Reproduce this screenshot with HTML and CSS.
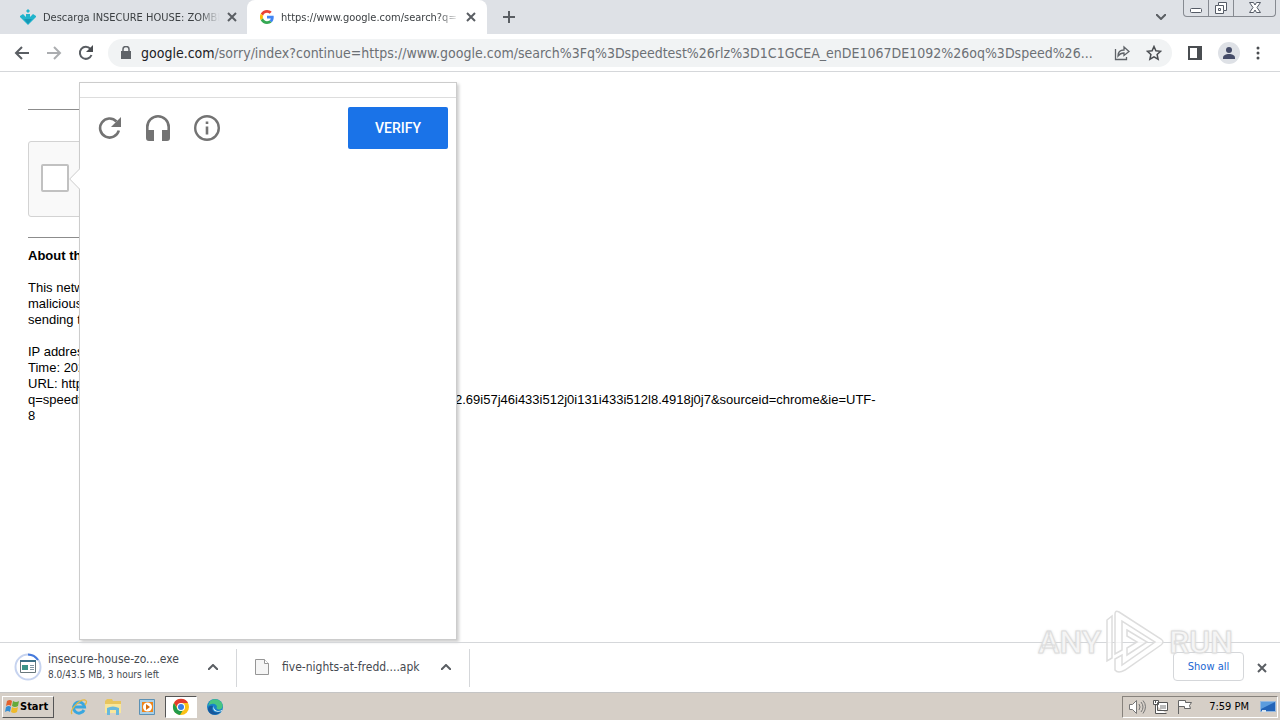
FILE: index.html
```html
<!DOCTYPE html>
<html lang="en">
<head>
<meta charset="utf-8">
<title>google.com/sorry</title>
<link rel="stylesheet" href="styles.css">
</head>
<body>
<div class="desktop">
<header class="tabs">
  <div class="tab">
    <svg class="fav" viewBox="0 0 16 16"><path fill="#20b4cc" d="M8 0l2 2-2 2-2-2zM0 7l3-2 3 3V5h4v3l3-3 3 2v1l-8 8-8-8z"/><path fill="#1697b5" d="M4 10h8l-4 5z"/></svg>
    <span class="tab-title">Descarga INSECURE HOUSE: ZOMBI</span>
    <button class="plain" aria-label="Close tab"><svg width="10" height="10" viewBox="0 0 10 10"><path class="line" d="M1 1l8 8M9 1l-8 8"/></svg></button>
  </div>
  <div class="tab active">
    <svg class="fav google" viewBox="0 0 48 48"><path fill="#ea4335" d="M24 9.5c3.5 0 6.700 1.200 9.200 3.600l6.900-6.900C35.900 2.400 30.500 0 24 0 14.600 0 6.500 5.400 2.600 13.200l8 6.200C12.400 13.700 17.700 9.500 24 9.500z"/><path fill="#4285f4" d="M47 24.500c0-1.600-.2-3.100-.4-4.500H24v9h12.900c-.6 3-2.300 5.500-4.800 7.200l7.700 6C44.400 38 47 32 47 24.500z"/><path fill="#fbbc05" d="M10.500 28.600a14 14 0 010-9.200l-8-6.200a24 24 0 000 21.600z"/><path fill="#34a853" d="M24 48c6.500 0 11.900-2.100 15.900-5.800l-7.700-6c-2.200 1.500-4.900 2.300-8.200 2.300-6.300 0-11.600-4.200-13.500-9.900l-8 6.200C6.500 42.600 14.600 48 24 48z"/></svg>
    <span class="tab-title">https://www.google.com/search?q=</span>
    <button class="plain" aria-label="Close tab"><svg width="10" height="10" viewBox="0 0 10 10"><path class="line" d="M1 1l8 8M9 1l-8 8"/></svg></button>
  </div>
  <button class="plain new-tab" aria-label="New tab"><svg width="12" height="12" viewBox="0 0 12 12"><path class="line" d="M6 0v12M0 6h12"/></svg></button>
  <button class="plain tab-search" aria-label="Search tabs"><svg width="10" height="6" viewBox="0 0 10 6"><path class="line" d="M0 0l5 5 5-5"/></svg></button>
  <div class="window-controls">
    <button aria-label="Minimize"><svg width="14" height="16" viewBox="0 0 14 16"><rect x="1.500" y="8.500" width="11" height="4" rx="1" fill="#fff" stroke="#555b66"/></svg></button>
    <button aria-label="Restore"><svg width="14" height="16" viewBox="0 0 14 16"><g fill="#fff" stroke="#555b66"><path d="M4.500 2.500h8v8h-3v3h-8v-8h3z"/><path d="M4.500 5.500h5v5M4.500 8.500h2v2h-2z"/></g></svg></button>
    <button class="wide" aria-label="Close"><svg width="14" height="14" viewBox="0 0 14 14"><path fill="#fff" stroke="#555b66" d="M1.500 1.500h4L7 4l1.500-2.500h4L9 6.500l3.500 5h-4L7 9l-1.500 2.500h-4l3.500-5z"/></svg></button>
  </div>
</header>
<nav class="toolbar">
  <button class="plain" aria-label="Back"><svg width="16" height="16" viewBox="0 0 16 16"><path class="bold" d="M15 8H2M8 2L2 8l6 6"/></svg></button>
  <button class="plain pale" aria-label="Forward"><svg width="16" height="16" viewBox="0 0 16 16"><path class="bold" d="M1 8h13M8 2l6 6-6 6"/></svg></button>
  <button class="plain" aria-label="Reload"><svg width="16" height="16" viewBox="0 0 16 16"><path class="bold" d="M13.500 10A6 6 0 1 1 12.500 4"/><path fill="#4a4d51" d="M15 0v7H8z"/></svg></button>
  <div class="omnibox">
    <svg width="10" height="14" viewBox="0 0 10 14"><path fill="#5f6368" d="M0 5h10v8H0z"/><path fill="none" stroke="#5f6368" stroke-width="1.500" d="M2 6V3a3 2.500 0 016 0v3"/></svg>
    <a class="url" href="#"><b>google.com</b>/sorry/index?continue=https://www.google.com/search%3Fq%3Dspeedtest%26rlz%3D1C1GCEA_enDE1067DE1092%26oq%3Dspeed%26...</a>
    <button class="plain" aria-label="Share"><svg width="16" height="16" viewBox="0 0 16 16"><path fill="none" stroke="#5f6368" stroke-width="1.300" d="M1.500 4v10.500h11V12M4 11c0-4 2-6 6-6V2l5 4.500-5 4V8c-3 0-4.500 1-6 3z"/></svg></button>
    <button class="plain" aria-label="Bookmark"><svg width="16" height="16" viewBox="0 0 16 16"><path fill="none" stroke="#4a4d51" stroke-width="1.500" d="M8 1.500l1.900 4.300 4.700.5-3.500 3.200 1 4.700L8 11.800l-4.100 2.400 1-4.700L1.400 6.300l4.700-.5z"/></svg></button>
  </div>
  <button class="plain" aria-label="Side panel"><svg width="14" height="14" viewBox="0 0 14 14"><path fill="#4a4d51" fill-rule="evenodd" d="M0 0h14v14H0zM2 2v10h7V2z"/></svg></button>
  <button class="plain" aria-label="Profile"><svg width="22" height="22" viewBox="0 0 22 22"><circle cx="11" cy="11" r="11" fill="#dee1e6"/><circle cx="11" cy="8" r="3" fill="#454c68"/><path fill="#454c68" d="M5 17v-1c0-3 3-4 6-4s6 1 6 4v1z"/></svg></button>
  <button class="plain" aria-label="Menu"><svg width="4" height="14" viewBox="0 0 4 14"><g fill="#4a4d51"><circle cx="2" cy="2" r="1.500"/><circle cx="2" cy="7" r="1.500"/><circle cx="2" cy="12" r="1.500"/></g></svg></button>
</nav>
<main class="page">
  <div class="content">
    <hr>
    <div class="captcha"><input type="checkbox" aria-label="I'm not a robot"></div>
    <hr>
    <section class="about">
      <b>About this page</b>
      <p>This network is blocked<br>malicious behavior<br>sending the requests</p>
      <p>IP address:<br>Time: 2023<br>URL: https://www<span class="query"><span>q=speedtest</span><span>2.69i57j46i433i512j0i131i433i512l8.4918j0j7&amp;sourceid=chrome&amp;ie=UTF-</span></span>8</p>
    </section>
  </div>
  <div class="challenge">
    <svg class="pointer" width="11" height="22" viewBox="0 0 11 22"><path fill="#fff" stroke="#ccc" d="M11 .5L.7 11 11 21.500"/></svg>
    <div class="challenge-bar">
      <button class="plain" aria-label="New challenge"><svg width="24" height="24" viewBox="0 0 24 24"><path fill="none" stroke="#737373" stroke-width="2.600" d="M20.800 14.500A9.500 9.500 0 1 1 18.500 5.500"/><path fill="#737373" d="M23 1v10H13z"/></svg></button>
      <button class="plain" aria-label="Audio challenge"><svg width="24" height="26" viewBox="0 0 24 26"><path fill="none" stroke="#737373" stroke-width="2.600" d="M1.300 17v-5a10.700 10.700 0 0121.400 0v5"/><path fill="#737373" d="M0 15h8v11H3q-3 0-3-3zM16 15h8v8q0 3-3 3h-5z"/></svg></button>
      <button class="plain" aria-label="Help"><svg width="26" height="26" viewBox="0 0 26 26"><circle cx="13" cy="13" r="11.800" fill="none" stroke="#737373" stroke-width="2.400"/><path fill="#737373" d="M11.700 6.500h2.600v2.600h-2.600zM11.700 11.500h2.600v8h-2.600z"/></svg></button>
      <button class="verify">VERIFY</button>
    </div>
  </div>
</main>
<section class="downloads">
  <div class="download first">
    <svg width="28" height="28" viewBox="0 0 28 28"><circle cx="14" cy="14" r="12.500" fill="none" stroke="#c6d3ef" stroke-width="2"/><path fill="none" stroke="#4479dc" stroke-width="2" d="M14 1.500A12.500 12.500 0 0124 7"/><path fill="#fff" stroke="#68777b" d="M6.500 8.500h15v11h-15z"/><path fill="#3b7187" d="M6 7h16v2H6z"/><path fill="#3b9488" d="M8 12h6v5H8z"/><path stroke="#8197a3" d="M16 12.500h4M16 14.500h4M16 16.500h4"/></svg>
    <div class="file"><span>insecure-house-zo....exe</span><small>8.0/43.5 MB, 3 hours left</small></div>
    <button class="plain" aria-label="Download options"><svg width="10" height="6" viewBox="0 0 10 6"><path class="line" d="M0 6l5-5 5 5"/></svg></button>
  </div>
  <div class="download second">
    <svg width="14" height="16" viewBox="0 0 14 16"><path fill="#f5f5f5" stroke="#969696" d="M.5.500h9l4 4v11H.5z"/><path fill="#fff" stroke="#969696" d="M9.500.500v4h4"/></svg>
    <div class="file"><span>five-nights-at-fredd....apk</span></div>
    <button class="plain" aria-label="Download options"><svg width="10" height="6" viewBox="0 0 10 6"><path class="line" d="M0 6l5-5 5 5"/></svg></button>
  </div>
  <button class="show-all">Show all</button>
  <button class="plain" aria-label="Close downloads"><svg width="10" height="10" viewBox="0 0 10 10"><path class="line" d="M1 1l8 8M9 1l-8 8"/></svg></button>
  <div class="watermark"><span>ANY</span><svg width="60" height="64" viewBox="0 0 60 64"><path fill="#fff" fill-opacity=".75" stroke="#ddd" stroke-width="1.500" d="M14 2l42 27q4 3 0 6L20 60q-7 4-10 0V49l7-4v10l33-23L17 11v29l-7 4V4q0-4 4-2zM2 10l5-4v42l-5 3zM22 20l20 12-20 13v-7l10-6-10-6z"/></svg><span>RUN</span></div>
</section>
<footer class="taskbar">
  <button class="start"><svg width="16" height="16" viewBox="0 0 16 16"><path fill="#e3612c" d="M3 2q3-2 5 0L7 7Q5 5 2 7z"/><path fill="#65aa3c" d="M9 2q3 2 6 0l-1 5q-3 2-6 0z"/><path fill="#348ed3" d="M2 8q3-2 5 0l-1 5q-2-2-5 0z"/><path fill="#efba2b" d="M8 8q3 2 6 0l-1 5q-3 2-6 0z"/></svg>Start</button>
  <button class="task" aria-label="Internet Explorer"><svg width="18" height="18" viewBox="0 0 18 18"><path fill="none" stroke="#39a7df" stroke-width="3" d="M14 12A5.500 5.500 0 1 1 14.500 9H5"/><path fill="none" stroke="#e5b943" stroke-width="1.300" d="M2 16C-1 12 10 1 15 2q3 1 0 5"/></svg></button>
  <button class="task" aria-label="Explorer"><svg width="18" height="18" viewBox="0 0 18 18"><path fill="#e8c55d" d="M1 3l2-2h5l1 2h8v12H1z"/><path fill="#f8e69b" d="M1 6h16v9H1z"/><path fill="#69b9dc" d="M3 10q6-3 12 0v7h-3v-5H6v5H3z"/></svg></button>
  <button class="task" aria-label="Media Player"><svg width="18" height="18" viewBox="0 0 18 18"><path fill="#aad0e7" stroke="#5c91b4" d="M1.500 1.500h15v15h-15z"/><path fill="#ef8519" d="M4 4h11v10H4z"/><circle cx="9.500" cy="9" r="4.500" fill="#fff"/><path fill="#d86f10" d="M8 6l4 3-4 3z"/></svg></button>
  <button class="task current" aria-label="Chrome"><svg width="18" height="18" viewBox="0 0 18 18"><circle cx="9" cy="9" r="8" fill="#fbc116"/><path fill="#e33b2e" d="M2 5a8 8 0 0114 0H9v4H5z"/><path fill="#229b4b" d="M2 5l4 7h5l-3 5A8 8 0 012 5z"/><circle cx="9" cy="9" r="4" fill="#fff"/><circle cx="9" cy="9" r="3" fill="#377fe5"/></svg></button>
  <button class="task" aria-label="Edge"><svg width="18" height="18" viewBox="0 0 18 18"><circle cx="9" cy="9" r="8" fill="#1683ca"/><path fill="#47c582" d="M4 3c7-5 15 2 12 7-2 3-7 1-5-1 0-3-5-5-9-1z"/><path fill="#17579b" d="M7 8c-3 4 2 9 8 5-4 6-13 4-13-2 0-3 3-4 5-3z"/><path fill="#e9f5fa" d="M8 8c-1 5 5 6 8 4v1c-7 2-10-1-8-5z"/></svg></button>
  <div class="tray">
    <svg width="18" height="16" viewBox="0 0 18 16"><path fill="#fff" stroke="#777" d="M1.500 5.500h3l4-4v13l-4-4h-3z"/><path fill="none" stroke="#777" d="M11 5q2 3 0 6M13 3q4 5 0 10M15 1.500q5 6 0 13"/></svg>
    <svg width="18" height="16" viewBox="0 0 18 16"><path fill="#fff" stroke="#555" d="M5.500 3.500h10v8h-10zM3.500 6v8.500h11M1.500 1.500h5v4h-5zM3.500 1v3"/><path fill="#bbb" d="M8 6h6v4H8z"/></svg>
    <svg width="18" height="16" viewBox="0 0 18 16"><path fill="#fff" stroke="#666" d="M2.500 15V1.500h7v2h6l-2 3 1 3h-6v-2h-6"/></svg>
    <time>7:59 PM</time>
    <svg width="16" height="14" viewBox="0 0 16 14"><path fill="#2364b8" stroke="#94b8df" d="M.5 1.500h15v10H.5z"/><path fill="#5b9cde" d="M1 2h14L1 9z"/><path fill="#d9e5ef" d="M2 10h4v2H2z"/></svg>
  </div>
</footer>
</div>
</body>
</html>
```
FILE: styles.css
```css
* { box-sizing: border-box; }
body { margin: 0; font-family: "DejaVu Sans Condensed", "DejaVu Sans", sans-serif; font-stretch: condensed; }
button { font: inherit; color: inherit; }
svg { display: block; flex: none; }
.line { fill: none; stroke: #5a5e63; stroke-width: 2; }
.bold { fill: none; stroke: #5a5e63; stroke-width: 2; }
.plain { border: 0; padding: 0; background: none; flex: none; }
.desktop { display: flex; flex-direction: column; height: 100vh; overflow: hidden; background: #fff; }

.tabs { display: flex; flex: none; height: 34px; background: #dee1e6; }
.tab { display: flex; align-items: center; gap: 7px; width: 247px; padding: 0 10px 0 20px; font-size: 11px; color: #3c4043; }
.tab.active { width: 240px; background: #fff; border-radius: 8px 8px 0 0; padding: 0 11px 0 13px; }
.fav { width: 16px; height: 16px; }
.google { width: 14px; height: 14px; }
.tab-title { flex: 1; overflow: hidden; white-space: nowrap; mask-image: linear-gradient(to right, #000 88%, transparent); }
.new-tab { margin-left: 16px; }
.tab-search { margin-left: auto; margin-right: 17px; }
.window-controls { display: flex; height: 17px; margin-right: 4px; border: 1px solid #868a91; border-top: 0; border-radius: 0 0 4px 4px; }
.window-controls button { display: grid; place-items: center; width: 25px; padding: 0; border: 0; border-right: 1px solid #868a91; background: none; }
.window-controls .wide { width: 41px; border-right: 0; }

.toolbar { display: flex; align-items: center; flex: none; gap: 16px; height: 38px; padding: 0 20px 0 14px; border-bottom: 1px solid #d5d7da; }
.pale { opacity: .5; }
.omnibox { display: flex; flex: 1; align-items: center; gap: 16px; min-width: 0; height: 28px; margin-left: -2px; padding: 0 10px 0 13px; border-radius: 14px; background: #f1f3f4; }
.url { flex: 1; min-width: 0; margin-left: -6px; overflow: hidden; white-space: nowrap; font-size: 14px; color: #6c7075; text-decoration: none; }
.url b { font-weight: 400; color: #202124; }

.page { position: relative; flex: 1; min-height: 0; }
.content { padding: 37px 0 0 28px; font: 13px/16px "Liberation Sans", Arial, sans-serif; color: #000; }
.content hr { max-width: 400px; margin: 0; border: 0; border-top: 1px solid #8c8c8c; }
.captcha { display: flex; align-items: center; width: 304px; height: 76px; margin: 31px 0 20px; padding: 0 0 2px 12px; border: 1px solid #d3d3d3; border-radius: 3px; background: #f9f9f9; }
.captcha input { appearance: none; width: 28px; height: 28px; margin: 0; border: 2px solid #c1c1c1; border-radius: 2px; background: #fff; }
.about { padding-top: 10px; }
.about p { margin: 16px 0 0; }
.query { display: grid; grid-template-columns: 427px 1fr; white-space: nowrap; }
.challenge { position: absolute; left: 79px; top: 10px; bottom: 2px; width: 378px; border: 1px solid #ccc; background: #fff; box-shadow: 2px 2px 3px rgba(0, 0, 0, .2); }
.pointer { position: absolute; left: -11px; top: 85px; }
.challenge-bar { display: flex; align-items: center; gap: 24px; height: 60px; margin-top: 14px; padding: 0 8px 0 18px; border-top: 1px solid #ddd; }
.verify { width: 100px; height: 42px; margin-left: auto; border: 0; border-radius: 2px; background: #1a73e8; color: #fff; font: 500 14px Roboto, sans-serif; }

.downloads { position: relative; display: flex; align-items: center; flex: none; height: 51px; padding-right: 13px; border-top: 1px solid #d5d7da; border-bottom: 1px solid #c5c5c5; }
.download { display: flex; align-items: center; height: 38px; border-right: 1px solid #d5d7da; font-size: 12px; color: #45494f; }
.first { width: 237px; gap: 6px; padding: 0 18px 2px 14px; }
.second { width: 233px; gap: 13px; padding: 0 18px 2px; }
.file { flex: 1; min-width: 0; white-space: nowrap; }
.file span, .file small { display: block; line-height: 16px; }
.file small { font-size: 10px; }
.show-all { width: 71px; height: 29px; margin: 0 13px 2px auto; padding: 0; border: 1px solid #d5d7da; border-radius: 4px; background: #fff; color: #1a66d2; font-size: 11px; }
.watermark { position: absolute; right: 47px; bottom: 18px; display: flex; align-items: center; gap: 4px; color: rgba(255, 255, 255, .8); font: 500 32px/64px Roboto, sans-serif; -webkit-text-stroke: 1px #ddd; text-shadow: 0 0 3px #ccc; pointer-events: none; }

.taskbar { display: flex; align-items: center; flex: none; height: 27px; padding: 0 2px; background: #d6cfc7; font-size: 11px; color: #000; }
.start { display: flex; align-items: center; gap: 0; width: 52px; height: 22px; margin-right: 9px; padding: 0 0 0 1px; border: 1px solid; border-color: #fff #555 #555 #fff; background: #d6cfc7; font-weight: 700; }
.task { display: grid; place-items: center; width: 32px; height: 22px; margin-right: 2px; padding: 0; border: 0; background: none; }
.current { background: #fff; border: 1px solid; border-color: #555 #fff #fff #555; }
.tray { display: flex; align-items: center; gap: 6px; height: 22px; margin-left: auto; padding: 0 1px 0 5px; border: 1px solid; border-color: #87827c #fff #fff #87827c; }
.tray time { padding: 0 5px 0 9px; }
```
